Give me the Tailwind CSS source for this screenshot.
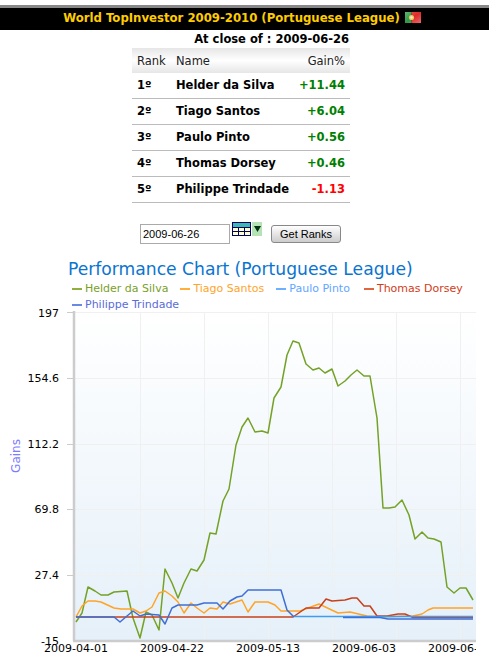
<!DOCTYPE html>
<html lang="en">
<head>
    <meta charset="UTF-8">
    <title>World TopInvestor 2009-2010 (Portuguese League)</title>
    <script src="https://cdn.jsdelivr.net/npm/@tailwindcss/browser@4"></script>
</head>
<body class="bg-white font-['DejaVu_Sans',Verdana,sans-serif] text-black overflow-hidden">
<!-- header bar -->
<div class="mt-[5px] h-[3px] bg-[#888888]"></div>
<div class="h-[22px] bg-black flex items-center justify-center pr-[5px] gap-[5px]">
    <span class="text-[11.7px] font-bold text-[#ffcc00] leading-none">World TopInvestor 2009-2010 (Portuguese League)</span>
    <svg width="16" height="11" viewBox="0 0 16 11" class="-mt-[3px]">
        <defs>
            <linearGradient id="sheen" x1="0" y1="0" x2="1" y2="1">
                <stop offset="0" stop-color="#fff" stop-opacity="0.25"/>
                <stop offset="0.5" stop-color="#fff" stop-opacity="0"/>
                <stop offset="1" stop-color="#fff" stop-opacity="0.3"/>
            </linearGradient>
        </defs>
        <rect width="6.5" height="11" fill="#2c9a46"/>
        <rect x="6.5" width="9.5" height="11" fill="#e02a2a"/>
        <circle cx="6.5" cy="5.5" r="2.6" fill="#e8c84a"/>
        <circle cx="6.5" cy="5.5" r="1.3" fill="#e9e9e9"/>
        <rect width="16" height="11" fill="url(#sheen)"/>
    </svg>
</div>

<!-- ranks -->
<div class="ml-[132px] w-[218px]">
    <div class="h-[18px] pr-px text-right text-[11.5px] font-bold leading-[18px]">At close of : 2009-06-26</div>
    <div class="h-[25px] flex items-center px-[5px] pt-[2px] text-[11.5px] text-[#222] bg-linear-to-b from-[#e6e6e6] via-white to-[#e6e6e6]">
        <span class="w-[39px]">Rank</span>
        <span class="flex-1">Name</span>
        <span>Gain%</span>
    </div>
    <div class="h-[26px] flex items-center px-[5px] pt-px text-[11.5px] font-bold border-b border-[#bbbbbb]">
        <span class="w-[39px]">1º</span>
        <span class="flex-1">Helder da Silva</span>
        <span class="text-[#008000]">+11.44</span>
    </div>
    <div class="h-[26px] flex items-center px-[5px] pt-px text-[11.5px] font-bold border-b border-[#bbbbbb]">
        <span class="w-[39px]">2º</span>
        <span class="flex-1">Tiago Santos</span>
        <span class="text-[#008000]">+6.04</span>
    </div>
    <div class="h-[26px] flex items-center px-[5px] pt-px text-[11.5px] font-bold border-b border-[#bbbbbb]">
        <span class="w-[39px]">3º</span>
        <span class="flex-1">Paulo Pinto</span>
        <span class="text-[#008000]">+0.56</span>
    </div>
    <div class="h-[26px] flex items-center px-[5px] pt-px text-[11.5px] font-bold border-b border-[#bbbbbb]">
        <span class="w-[39px]">4º</span>
        <span class="flex-1">Thomas Dorsey</span>
        <span class="text-[#008000]">+0.46</span>
    </div>
    <div class="h-[26px] flex items-center px-[5px] pt-px text-[11.5px] font-bold border-b border-[#bbbbbb]">
        <span class="w-[39px]">5º</span>
        <span class="flex-1">Philippe Trindade</span>
        <span class="text-[#ff0000]">-1.13</span>
    </div>
</div>

<!-- date form -->
<div class="mt-[19px] ml-[140px] h-[22px] flex items-start font-['Liberation_Sans',Arial,sans-serif]">
    <input type="text" value="2009-06-26" class="mt-[2px] w-[90px] h-[20px] px-[2px] border border-[#aaaaaa] text-[11px] text-black outline-none">
    <svg width="19" height="14" viewBox="0 0 19 14" class="ml-[2px]">
        <rect x="0.5" y="0.5" width="18" height="13" fill="#ffffcc" stroke="#000066"/>
        <rect x="1" y="1" width="17" height="4" fill="#3fb8b0"/>
        <path d="M1 5.5H18M1 9.5H18M6.5 5V13M12.5 5V13" stroke="#000066" fill="none"/>
    </svg>
    <div class="ml-px w-[10px] h-[14px] bg-[#b5e3b5] flex items-center justify-center">
        <svg width="7" height="6" viewBox="0 0 7 6"><path d="M0 0H7L3.5 6Z" fill="#003311"/></svg>
    </div>
    <button class="mt-[3px] ml-[9px] w-[70px] h-[18px] border border-[#888888] rounded-[3px] text-[11px] leading-none text-black bg-linear-to-b from-white to-[#cccccc]">Get Ranks</button>
</div>

<!-- chart heading and legend -->
<div class="mt-[14px] ml-[68px] text-[17.15px] leading-[22px] text-[#0a74cf]">Performance Chart (Portuguese League)</div>
<div class="mt-px -mb-[7px] ml-[72px] w-[404px] flex flex-wrap gap-x-[12px] text-[11px] leading-[16px]">
    <div class="flex items-center gap-[3px] text-[#7a9f2a]"><span class="w-[10px] h-[2px] bg-[#8fb03c]"></span>Helder da Silva</div>
    <div class="flex items-center gap-[3px] text-[#ffa42a]"><span class="w-[10px] h-[2px] bg-[#ffaf3c]"></span>Tiago Santos</div>
    <div class="flex items-center gap-[3px] text-[#62a6ff]"><span class="w-[10px] h-[2px] bg-[#6cb0ff]"></span>Paulo Pinto</div>
    <div class="ml-[2px] flex items-center gap-[3px] text-[#d23c20]"><span class="w-[10px] h-[2px] bg-[#e0663f]"></span>Thomas Dorsey</div>
    <div class="flex items-center gap-[3px] text-[#5a6cd8]"><span class="w-[10px] h-[2px] bg-[#6a8ae0]"></span>Philippe Trindade</div>
</div>

<!-- chart, viewBox uses page coordinates, cut off at the plot's right edge -->
<svg width="476" height="361" viewBox="0 306 476 361" class="block" font-family="DejaVu Sans, Verdana, sans-serif" font-size="11">
    <defs>
        <linearGradient id="plotBg" x1="0" y1="0" x2="0" y2="1">
            <stop offset="0" stop-color="#ffffff"/>
            <stop offset="1" stop-color="#e5f0f9"/>
        </linearGradient>
    </defs>
    <rect x="75" y="312" width="401" height="328" fill="url(#plotBg)"/>
    <path d="M75 312.5H476M75 378.5H476M75 444.5H476M75 509.5H476M75 575.5H476" stroke="#f0f0f0" fill="none"/>
    <path d="M140.5 312V640M204.5 312V640M268.5 312V640M332.5 312V640M396.5 312V640M460.5 312V640" stroke="#f0f0f0" fill="none"/>
    <path d="M67 312.5H73M67 378.5H73M67 444.5H73M67 509.5H73M67 575.5H73" stroke="#cccccc" fill="none"/>
    <path d="M74 311V641M73 641H476" stroke="#cccccc" stroke-width="2.5" fill="none"/>

    <g fill="none" stroke-width="1.5" stroke-linejoin="round">
        <polyline stroke="#74a226" points="76,622 82,613 88,587 95,591 101,595 108,595 114,592 127,591 133,618 140,638 146,612 152,615 159,630 165,569 172,583 178,598 184,583 191,569 197,571 204,560 210,533 216,534 223,501 229,489 236,445 242,427 248,418 255,432 262,431 268,433 274,398 281,387 287,355 293,341 299,343 306,364 313,370 319,368 325,373 332,369 338,386 345,381 351,375 357,370 364,376 370,376 377,418 383,508 389,508 395,507 402,500 409,515 415,539 422,532 428,538 434,539 441,542 447,587 454,593 460,588 466,588 473,600"/>
        <polyline stroke="#ffa426" points="76,617 82,606 88,601 95,601 101,602 114,608 121,609 133,609 140,613 146,611 152,607 159,593 165,591 172,596 178,602 184,613 191,603 197,608 204,613 210,608 217,609 223,602 230,604 242,600 248,612 255,602 268,602 275,605 281,611 300,611 319,604 338,613 350,612 367,616 383,617 413,616 422,614 428,610 433,608 473,608"/>
        <polyline stroke="#c8401a" points="76,617 293,617 306,608 319,608 326,599 332,601 345,600 352,598 357,598 364,606 370,606 377,616 387,616 398,614 405,614 413,617.5 473,617.5"/>
        <polyline stroke="#3f9cf2" points="294,616.5 473,616.5"/>
        <polyline stroke="#3f6fd6" points="76,617 114,617 120,622 127,616 133,611 140,616 146,614 159,615 165,624 172,608 178,605 197,605 204,603 217,603 223,609 230,601 237,597 242,596 248,590 281,590 287,610 294,617"/>
        <polyline stroke="#3f6fd6" points="343,617.5 380,617.5 388,619 473,619"/>
    </g>

    <g text-anchor="end" fill="#000000">
        <text x="59" y="317">197</text>
        <text x="59" y="382">154.6</text>
        <text x="59" y="448">112.2</text>
        <text x="59" y="513">69.8</text>
        <text x="59" y="579">27.4</text>
        <text x="59" y="645">-15</text>
    </g>
    <g text-anchor="middle" fill="#000000">
        <text x="76" y="652">2009-04-01</text>
        <text x="172" y="652">2009-04-22</text>
        <text x="268" y="652">2009-05-13</text>
        <text x="364" y="652">2009-06-03</text>
        <text x="460" y="652">2009-06-24</text>
    </g>
    <text x="20" y="456" font-size="12" text-anchor="middle" fill="#7b7bff" transform="rotate(-90 20 456)">Gains</text>
</svg>
</body>
</html>
